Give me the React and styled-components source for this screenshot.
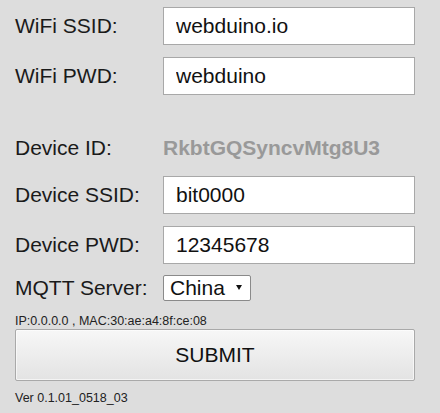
import React, { useState } from "react";
import styled, { createGlobalStyle } from "styled-components";

const GlobalStyle = createGlobalStyle`
  html, body {
    margin: 0;
    padding: 0;
    background: #dddddd;
  }
  body {
    font-family: "Liberation Sans", Arial, sans-serif;
  }
`;

const Page = styled.form`
  width: 400px;
  padding: 7px 15px 0 15px;
  color: #111;
`;

const Row = styled.div`
  display: flex;
  align-items: center;
  height: ${p => p.h || 38}px;
  margin-top: ${p => p.mt || 0}px;
`;

const Label = styled.label`
  width: 148px;
  flex: none;
  font-size: 21px;
  line-height: 24px;
  color: #1a1a1a;
`;

const TextInput = styled.input`
  box-sizing: border-box;
  width: 252px;
  height: 38px;
  padding: 0 12px;
  border: 1px solid #a8a8a8;
  background: #fff;
  font-family: "Liberation Sans", Arial, sans-serif;
  font-size: 21px;
  color: #111;
  outline: none;
`;

const DeviceId = styled.span`
  font-size: 21px;
  font-weight: bold;
  color: #999;
`;

const SelectWrap = styled.div`
  position: relative;
  width: 88px;
  height: 26px;
`;

const Select = styled.select`
  appearance: none;
  -webkit-appearance: none;
  box-sizing: border-box;
  width: 100%;
  height: 100%;
  padding: 0 0 0 6px;
  border: 1px solid #8a8a8a;
  border-radius: 2px;
  background: #fff;
  font-family: "Liberation Sans", Arial, sans-serif;
  font-size: 21px;
  line-height: 24px;
  color: #111;
  outline: none;
`;

const Caret = styled.span`
  position: absolute;
  right: 9px;
  top: 10px;
  width: 0;
  height: 0;
  border-left: 3.5px solid transparent;
  border-right: 3.5px solid transparent;
  border-top: 5px solid #111;
  pointer-events: none;
`;

const SmallText = styled.div`
  font-size: 12.5px;
  line-height: 14px;
  color: ${p => p.color || "#222"};
  margin-top: ${p => p.mt || 0}px;
`;

const SubmitButton = styled.button`
  box-sizing: border-box;
  display: block;
  width: 400px;
  height: 52px;
  margin-top: 1px;
  border: 1px solid #a9a9a9;
  border-radius: 2px;
  background: linear-gradient(#f7f7f7, #e3e3e3);
  box-shadow: inset 0 0 0 1px rgba(255, 255, 255, 0.6);
  font-family: "Liberation Sans", Arial, sans-serif;
  font-size: 21px;
  color: #111;
  cursor: pointer;
`;

export default function App() {
  const [ssid, setSsid] = useState("webduino.io");
  const [pwd, setPwd] = useState("webduino");
  const [devSsid, setDevSsid] = useState("bit0000");
  const [devPwd, setDevPwd] = useState("12345678");
  const [server, setServer] = useState("China");

  return (
    <>
      <GlobalStyle />
      <Page onSubmit={e => e.preventDefault()}>
        <Row>
          <Label>WiFi SSID:</Label>
          <TextInput value={ssid} onChange={e => setSsid(e.target.value)} />
        </Row>
        <Row mt={12}>
          <Label>WiFi PWD:</Label>
          <TextInput value={pwd} onChange={e => setPwd(e.target.value)} />
        </Row>
        <Row mt={34}>
          <Label>Device ID:</Label>
          <DeviceId>RkbtGQSyncvMtg8U3</DeviceId>
        </Row>
        <Row mt={9}>
          <Label>Device SSID:</Label>
          <TextInput value={devSsid} onChange={e => setDevSsid(e.target.value)} />
        </Row>
        <Row mt={12}>
          <Label>Device PWD:</Label>
          <TextInput value={devPwd} onChange={e => setDevPwd(e.target.value)} />
        </Row>
        <Row h={26} mt={11}>
          <Label>MQTT Server:</Label>
          <SelectWrap>
            <Select value={server} onChange={e => setServer(e.target.value)}>
              <option>China</option>
              <option>Global</option>
            </Select>
            <Caret />
          </SelectWrap>
        </Row>
        <SmallText mt={13}>IP:0.0.0.0 , MAC:30:ae:a4:8f:ce:08</SmallText>
        <SubmitButton type="submit">SUBMIT</SubmitButton>
        <SmallText mt={10}>Ver 0.1.01_0518_03</SmallText>
      </Page>
    </>
  );
}
